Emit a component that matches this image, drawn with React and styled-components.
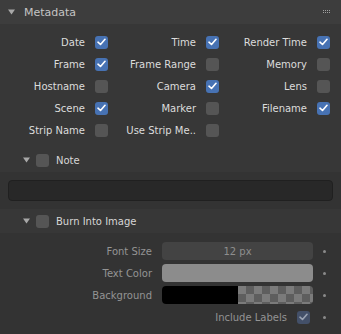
import styled, { createGlobalStyle } from "styled-components";

const GlobalStyle = createGlobalStyle`
  html, body {
    margin: 0;
    padding: 0;
    background: #373737;
  }
  body {
    font-family: "DejaVu Sans", "Liberation Sans", sans-serif;
  }
`;

const Panel = styled.div`
  width: 341px;
  height: 334px;
  background: #373737;
  overflow: hidden;
  display: flex;
  flex-direction: column;
`;

const Header = styled.div`
  height: 24px;
  background: #3d3d3d;
  display: flex;
  align-items: center;
  padding: 0 10px 0 8px;
  flex-shrink: 0;
`;

const HeaderTitle = styled.span`
  font-size: 11px;
  color: #c4c4c4;
  margin-left: 9px;
  flex: 1;
`;

const CheckGrid = styled.div`
  display: grid;
  grid-template-columns: 111px 111px 111px;
  grid-auto-rows: 22px;
  padding: 7px 0;
`;

const CheckItem = styled.div`
  display: flex;
  align-items: center;
  justify-content: flex-end;
  gap: 10px;
  padding-right: 3px;
  font-size: 10px;
  color: #dcdcdc;
  white-space: nowrap;
`;

const Box = styled.span`
  width: 13px;
  height: 13px;
  border-radius: 3px;
  flex-shrink: 0;
  display: flex;
  align-items: center;
  justify-content: center;
  background: ${({ $checked, $dim }) =>
    $checked ? ($dim ? "#435069" : "#4772b3") : "#555555"};
`;

const SubHeader = styled.div`
  height: 24px;
  display: flex;
  align-items: center;
  padding-left: 23px;
  font-size: 10px;
  color: #d6d6d6;
  flex-shrink: 0;
  background: #373737;
`;

const SubTitle = styled.span`
  margin-left: 7px;
`;

const Spacer = styled.span`
  width: 6px;
`;

const SubBody = styled.div`
  background: #333333;
  padding: ${({ $pad }) => $pad};
`;

const TextField = styled.div`
  height: 19px;
  margin: 0 8px;
  background: #282828;
  border: 1px solid #202020;
  border-radius: 4px;
`;

const PropRow = styled.div`
  display: grid;
  grid-template-columns: 152px 151px 1fr;
  column-gap: 10px;
  height: 22px;
  align-items: center;
`;

const PropLabel = styled.span`
  font-size: 10px;
  color: #949494;
  text-align: right;
  white-space: nowrap;
`;

const Field = styled.div`
  height: 18px;
  border-radius: 4px;
  background: ${({ $bg }) => $bg || "#434343"};
  display: flex;
  align-items: center;
  justify-content: center;
  font-size: 10px;
  color: #8e8e8e;
  overflow: hidden;
`;

const ColorHalf = styled.div`
  flex: 1;
  height: 100%;
  background: ${({ $checker }) =>
    $checker
      ? "repeating-conic-gradient(#5e5e5e 0 25%, #7b7b7b 0 50%) 0 0 / 16px 16px"
      : "#000000"};
`;

const CheckCell = styled.div`
  display: flex;
  justify-content: flex-end;
  align-items: center;
  gap: 10px;
  padding-right: 3px;
`;

const Dot = styled.span`
  width: 3px;
  height: 3px;
  border-radius: 50%;
  background: #8a8a8a;
  justify-self: start;
`;

const Tick = ({ color = "#ffffff" }) => (
  <svg width="9" height="8" viewBox="0 0 9 8">
    <path
      d="M1 4.2 L3.5 6.5 L8 1.3"
      fill="none"
      stroke={color}
      strokeWidth="1.6"
      strokeLinecap="round"
      strokeLinejoin="round"
    />
  </svg>
);

const Check = ({ checked, dim }) => (
  <Box $checked={checked} $dim={dim}>
    {checked && <Tick color={dim ? "#9aa3b3" : "#ffffff"} />}
  </Box>
);

const Arrow = ({ color = "#a8a8a8" }) => (
  <svg width="7" height="6" viewBox="0 0 7 6">
    <polygon points="0,0.5 7,0.5 3.5,5.5" fill={color} />
  </svg>
);

const Grip = () => (
  <svg width="8" height="4" viewBox="0 0 8 4">
    {[0, 2, 4, 6].map((x) =>
      [0, 2].map((y) => (
        <rect key={`${x}-${y}`} x={x} y={y} width="1" height="1" fill="#a0a0a0" />
      ))
    )}
  </svg>
);

const items = [
  ["Date", true], ["Time", true], ["Render Time", true],
  ["Frame", true], ["Frame Range", false], ["Memory", false],
  ["Hostname", false], ["Camera", true], ["Lens", false],
  ["Scene", true], ["Marker", false], ["Filename", true],
  ["Strip Name", false], ["Use Strip Me..", false],
];

export default function App() {
  return (
    <>
      <GlobalStyle />
      <Panel>
        <Header>
          <Arrow />
          <HeaderTitle>Metadata</HeaderTitle>
          <Grip />
        </Header>
        <CheckGrid>
          {items.map(([label, checked]) => (
            <CheckItem key={label}>
              {label}
              <Check checked={checked} />
            </CheckItem>
          ))}
        </CheckGrid>
        <SubHeader>
          <Arrow />
          <Spacer />
          <Check checked={false} />
          <SubTitle>Note</SubTitle>
        </SubHeader>
        <SubBody $pad="8px 0">
          <TextField />
        </SubBody>
        <SubHeader>
          <Arrow />
          <Spacer />
          <Check checked={false} />
          <SubTitle>Burn Into Image</SubTitle>
        </SubHeader>
        <SubBody $pad="7px 0 20px">
          <PropRow>
            <PropLabel>Font Size</PropLabel>
            <Field>12 px</Field>
            <Dot />
          </PropRow>
          <PropRow>
            <PropLabel>Text Color</PropLabel>
            <Field $bg="#8c8c8c" />
            <Dot />
          </PropRow>
          <PropRow>
            <PropLabel>Background</PropLabel>
            <Field>
              <ColorHalf />
              <ColorHalf $checker />
            </Field>
            <Dot />
          </PropRow>
          <PropRow>
            <span />
            <CheckCell>
              <PropLabel>Include Labels</PropLabel>
              <Check checked dim />
            </CheckCell>
            <Dot />
          </PropRow>
        </SubBody>
      </Panel>
    </>
  );
}
